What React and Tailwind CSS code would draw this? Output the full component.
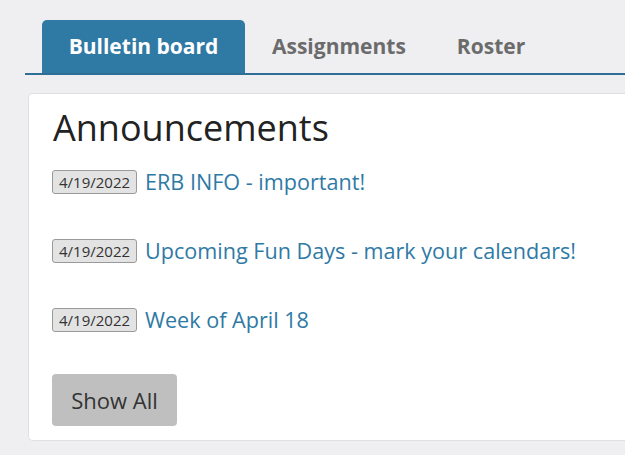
import React from 'react';

const items = [
  { date: '4/19/2022', title: 'ERB INFO - important!' },
  { date: '4/19/2022', title: 'Upcoming Fun Days - mark your calendars!' },
  { date: '4/19/2022', title: 'Week of April 18' },
];

function Tabs() {
  return (
    <div className="ml-[25px] flex items-end border-b-2 border-[#2f6f97] pl-[17px]">
      <div className="flex h-[53px] w-[203px] items-center justify-center rounded-t-[5px] bg-[#2f7aa5] text-[21px] font-bold text-white">
        Bulletin board
      </div>
      <div className="flex h-[53px] items-center pl-[27px] pr-[51px] text-[21px] font-bold text-[#6b6b6b]">
        Assignments
      </div>
      <div className="flex h-[53px] items-center text-[21px] font-bold text-[#6b6b6b]">
        Roster
      </div>
    </div>
  );
}

export default function App() {
  return (
    <div className="min-h-[455px] bg-[#efeff1] pt-[20px] font-['Open_Sans',sans-serif]">
      <Tabs />
      <section className="ml-[28px] mt-[18px] rounded-l-[5px] border border-r-0 border-[#e0e0e2] bg-white pb-[14px] pl-[23px] pt-[10px]">
        <h2 className="pl-[1px] text-[36px] leading-[48px] text-[#222]">Announcements</h2>
        <ul className="mt-[18px] flex flex-col gap-[45px]">
          {items.map((it, i) => (
            <li key={i} className="flex items-center gap-[8px]">
              <span className="rounded-[3px] border border-[#9a9a9a] bg-[#e3e3e3] px-[6px] text-[15px] leading-[22px] text-[#333]">
                {it.date}
              </span>
              <a href="#" className="text-[21.6px] leading-[24px] text-[#2f7aa5]">
                {it.title}
              </a>
            </li>
          ))}
        </ul>
        <button className="mt-[42px] h-[52px] w-[125px] rounded-[4px] bg-[#bfbfbf] text-[22px] text-[#333]">
          Show All
        </button>
      </section>
    </div>
  );
}
